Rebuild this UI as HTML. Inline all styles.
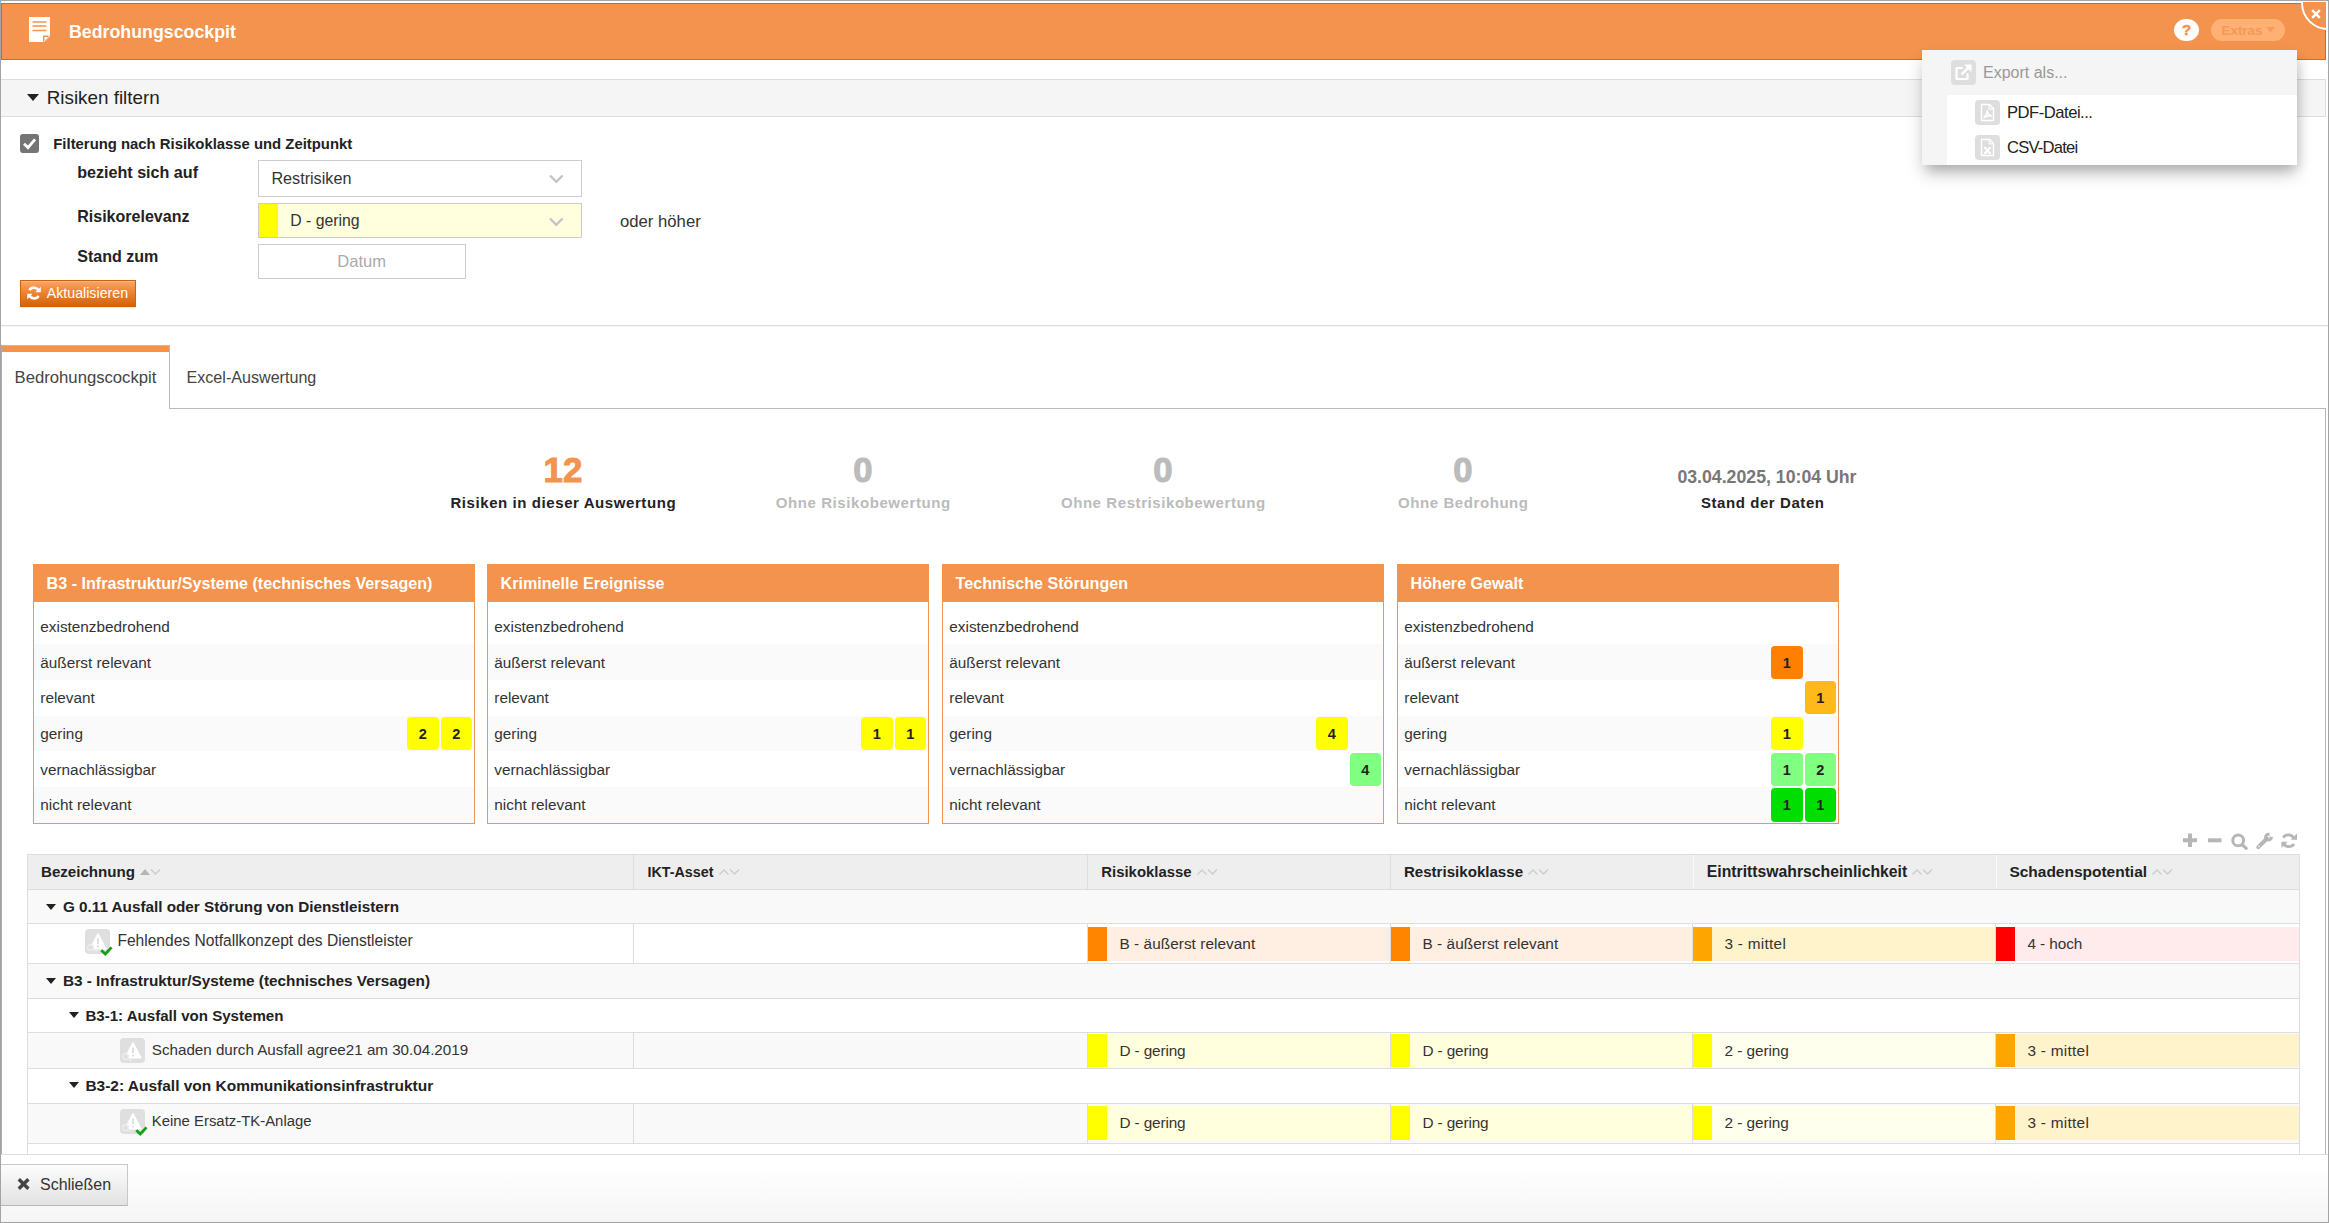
<!DOCTYPE html>
<html lang="de"><head><meta charset="utf-8"><title>Bedrohungscockpit</title>
<style>
html,body{margin:0;padding:0;background:#fff;}
body{width:2329px;height:1223px;position:relative;overflow:hidden;font-family:"Liberation Sans",sans-serif;}
.b{position:absolute;display:block;}
.t{position:absolute;white-space:nowrap;display:block;}
</style></head><body>
<div class="b" style="left:0px;top:0px;width:2329px;height:1223px;background:#fff;"></div>
<div class="b" style="left:0px;top:0px;width:2329px;height:1px;background:#a4a4a4;"></div>
<div class="b" style="left:0px;top:0px;width:1px;height:1223px;background:#a4a4a4;"></div>
<div class="b" style="left:2328px;top:0px;width:1px;height:1223px;background:#a4a4a4;"></div>
<div class="b" style="left:0px;top:1222px;width:2329px;height:1px;background:#a4a4a4;"></div>
<div class="b" style="left:1px;top:345px;width:1px;height:810px;background:#aaa;"></div>
<div class="b" style="left:2325px;top:408px;width:1px;height:747px;background:#b4b4b4;"></div>
<div class="b" style="left:1px;top:3px;width:2325px;height:57px;background:#f4934d;border:1px solid #d8690e;box-sizing:border-box;"></div>
<svg class="b" style="left:29px;top:17px" width="21" height="25" viewBox="0 0 21 25"><path d="M0 0H21V19L15 25H0Z" fill="#fff"/><path d="M14 18.5H20.5L14 25Z" fill="#f4934d"/><path d="M15.5 20H19L15.5 23.5Z" fill="#fff"/><g stroke="#f4934d" stroke-width="1.3"><path d="M3.5 5H17.5M3.5 9H17.5M3.5 13.5H17.5"/></g></svg>
<span class="t" style="left:69.0px;top:20px;font-size:17.79px;line-height:24px;color:#fff;font-weight:bold;">Bedrohungscockpit</span>
<div class="b" style="left:2174px;top:19px;width:25px;height:22px;background:#fff;border-radius:12px/11px;"></div>
<span class="t" style="left:2181.9px;top:19px;font-size:15px;line-height:21px;color:#f4934d;font-weight:bold;-webkit-text-stroke:0.5px #f4934d;">?</span>
<div class="b" style="left:2211px;top:19px;width:74px;height:22px;background:#ffb072;border-radius:11px;"></div>
<span class="t" style="left:2221.5px;top:21px;font-size:13.41px;line-height:19px;color:#f4985a;font-weight:bold;">Extras</span>
<svg class="b" style="left:2266px;top:27px" width="9" height="6"><path d="M0 0H9L4.5 5.5Z" fill="#f59c5c"/></svg>
<div class="b" style="left:2290px;top:2px;width:36px;height:40px;overflow:hidden;"><div class="b" style="left:11px;top:-26px;width:54px;height:54px;border-radius:50%;border:2px solid #fff;background:#f4934d;box-sizing:border-box;"></div></div>
<svg class="b" style="left:2311px;top:9px" width="10" height="10" viewBox="0 0 10 10"><path d="M1.2 1.2L8.8 8.8M8.8 1.2L1.2 8.8" stroke="#fff" stroke-width="2.6"/></svg>
<div class="b" style="left:1px;top:79px;width:2325px;height:38px;background:#f5f5f5;border:1px solid #ddd;border-left:none;box-sizing:border-box;"></div>
<svg class="b" style="left:27px;top:94px" width="12" height="7"><path d="M0 0H12L6 7Z" fill="#222"/></svg>
<span class="t" style="left:46.7px;top:85px;font-size:18.83px;line-height:25px;color:#222;">Risiken filtern</span>
<div class="b" style="left:20px;top:134px;width:19px;height:19px;background:#757575;border-radius:3px;"></div>
<svg class="b" style="left:20px;top:134px" width="19" height="19" viewBox="0 0 19 19"><path d="M4 9.8L8 13.6L15 5.4" stroke="#fff" stroke-width="2.8" fill="none"/></svg>
<span class="t" style="left:53.3px;top:134px;font-size:14.87px;line-height:20px;color:#222;font-weight:bold;">Filterung nach Risikoklasse und Zeitpunkt</span>
<span class="t" style="left:77.2px;top:161px;font-size:16.13px;line-height:22px;color:#222;font-weight:bold;">bezieht sich auf</span>
<span class="t" style="left:77.2px;top:205px;font-size:16.05px;line-height:22px;color:#222;font-weight:bold;">Risikorelevanz</span>
<span class="t" style="left:77.2px;top:245px;font-size:16.06px;line-height:22px;color:#222;font-weight:bold;">Stand zum</span>
<div class="b" style="left:258px;top:160px;width:324px;height:37px;border:1px solid #ccc;box-sizing:border-box;background:#fff;"></div>
<span class="t" style="left:271.4px;top:167px;font-size:16.18px;line-height:22px;color:#333;">Restrisiken</span>
<svg class="b" style="left:548.5px;top:173.5px" width="15" height="10" viewBox="0 0 15 10"><path d="M1 1.5L7.3 7.8L13.6 1.5" stroke="#c4c4c4" stroke-width="2.4" fill="none"/></svg>
<div class="b" style="left:258px;top:203px;width:324px;height:35px;border:1px solid #ccc;box-sizing:border-box;background:#ffffdd;"></div>
<div class="b" style="left:259px;top:204px;width:19px;height:33px;background:#ffff00;"></div>
<span class="t" style="left:290.3px;top:210px;font-size:15.81px;line-height:21px;color:#333;">D - gering</span>
<svg class="b" style="left:548.5px;top:216.5px" width="15" height="10" viewBox="0 0 15 10"><path d="M1 1.5L7.3 7.8L13.6 1.5" stroke="#c4c4c4" stroke-width="2.4" fill="none"/></svg>
<span class="t" style="left:620.0px;top:210px;font-size:16.71px;line-height:23px;color:#333;">oder höher</span>
<div class="b" style="left:258px;top:244px;width:208px;height:35px;border:1px solid #ccc;box-sizing:border-box;background:#fff;"></div>
<span class="t" style="left:337.3px;top:250px;font-size:16.57px;line-height:23px;color:#aaa;">Datum</span>
<div class="b" style="left:20px;top:280px;width:116px;height:27px;background:linear-gradient(#f9a667 0%,#ee8333 45%,#d2630a 100%);border:1px solid #cf6209;box-sizing:border-box;box-shadow:0 1px 1px rgba(0,0,0,.08), inset 0 1px 0 rgba(255,255,255,.18);"></div>
<svg class="b" style="left:27px;top:286px" width="14" height="14" viewBox="0 0 14 14"><path d="M11.8 5.2A5.2 5.2 0 0 0 2.4 4.2M2.2 8.8A5.2 5.2 0 0 0 11.6 9.8" stroke="#fff" stroke-width="2.6" fill="none"/><path d="M13.8 0.8V6.3H8.3Z M0.2 13.2V7.7H5.7Z" fill="#fff"/></svg>
<span class="t" style="left:46.7px;top:283px;font-size:14.22px;line-height:20px;color:#fff;">Aktualisieren</span>
<div class="b" style="left:1px;top:325px;width:2327px;height:1px;background:#dcdcdc;"></div>
<div class="b" style="left:1px;top:326px;width:2327px;height:1px;background:#f4f4f4;"></div>
<div class="b" style="left:2px;top:346px;width:167px;height:6px;background:#f4934d;"></div>
<div class="b" style="left:2px;top:345px;width:168px;height:1px;background:#b9bdc1;"></div>
<div class="b" style="left:169px;top:346px;width:1px;height:63px;background:#bbb;"></div>
<div class="b" style="left:169px;top:408px;width:2157px;height:1px;background:#bbb;"></div>
<span class="t" style="left:14.6px;top:366px;font-size:16.68px;line-height:23px;color:#444;">Bedrohungscockpit</span>
<span class="t" style="left:186.5px;top:366px;font-size:16.12px;line-height:22px;color:#444;">Excel-Auswertung</span>
<span class="t" style="left:543.6px;top:449px;font-size:34.8px;line-height:42px;color:#f4934d;font-weight:bold;-webkit-text-stroke:1px #f4934d;">12</span>
<span class="t" style="left:450.4px;top:492px;font-size:15px;line-height:21px;color:#222;font-weight:bold;letter-spacing:0.58px;">Risiken in dieser Auswertung</span>
<span class="t" style="left:853.3px;top:449px;font-size:34.8px;line-height:42px;color:#bbb;font-weight:bold;-webkit-text-stroke:1px #bbb;">0</span>
<span class="t" style="left:775.8px;top:492px;font-size:15px;line-height:21px;color:#bbb;font-weight:bold;letter-spacing:0.58px;">Ohne Risikobewertung</span>
<span class="t" style="left:1153.3px;top:449px;font-size:34.8px;line-height:42px;color:#bbb;font-weight:bold;-webkit-text-stroke:1px #bbb;">0</span>
<span class="t" style="left:1060.9px;top:492px;font-size:15px;line-height:21px;color:#bbb;font-weight:bold;letter-spacing:0.58px;">Ohne Restrisikobewertung</span>
<span class="t" style="left:1453.3px;top:449px;font-size:34.8px;line-height:42px;color:#bbb;font-weight:bold;-webkit-text-stroke:1px #bbb;">0</span>
<span class="t" style="left:1398.0px;top:492px;font-size:15px;line-height:21px;color:#bbb;font-weight:bold;letter-spacing:0.58px;">Ohne Bedrohung</span>
<span class="t" style="left:1677.4px;top:465px;font-size:17.72px;line-height:24px;color:#777;font-weight:bold;">03.04.2025, 10:04 Uhr</span>
<span class="t" style="left:1700.9px;top:492px;font-size:15px;line-height:21px;color:#222;font-weight:bold;letter-spacing:0.58px;">Stand der Daten</span>
<div class="b" style="left:33px;top:564px;width:442px;height:260px;border:1px solid #f4934d;box-sizing:border-box;background:#fff;"></div>
<div class="b" style="left:33px;top:564px;width:442px;height:38px;background:#f4934d;"></div>
<span class="t" style="left:46.6px;top:572px;font-size:16.12px;line-height:22px;color:#fff;font-weight:bold;">B3 - Infrastruktur/Systeme (technisches Versagen)</span>
<span class="t" style="left:40.3px;top:616px;font-size:15.33px;line-height:21px;color:#333;">existenzbedrohend</span>
<div class="b" style="left:34px;top:644px;width:440px;height:36px;background:#fafafa;"></div>
<span class="t" style="left:40.3px;top:652px;font-size:15.33px;line-height:21px;color:#333;">äußerst relevant</span>
<span class="t" style="left:40.3px;top:687px;font-size:15.33px;line-height:21px;color:#333;">relevant</span>
<div class="b" style="left:34px;top:716px;width:440px;height:35px;background:#fafafa;"></div>
<span class="t" style="left:40.3px;top:723px;font-size:15.33px;line-height:21px;color:#333;">gering</span>
<div class="b" style="left:407.0px;top:717px;width:31.5px;height:33px;background:#ffff00;border-radius:4px;"></div>
<span class="t" style="left:418.7px;top:724px;font-size:14.5px;line-height:20px;color:#222;font-weight:bold;">2</span>
<div class="b" style="left:440.5px;top:717px;width:31.5px;height:33px;background:#ffff00;border-radius:4px;"></div>
<span class="t" style="left:452.2px;top:724px;font-size:14.5px;line-height:20px;color:#222;font-weight:bold;">2</span>
<span class="t" style="left:40.3px;top:759px;font-size:15.33px;line-height:21px;color:#333;">vernachlässigbar</span>
<div class="b" style="left:34px;top:787px;width:440px;height:36px;background:#fafafa;"></div>
<span class="t" style="left:40.3px;top:794px;font-size:15.33px;line-height:21px;color:#333;">nicht relevant</span>
<div class="b" style="left:487px;top:564px;width:442px;height:260px;border:1px solid #f4934d;box-sizing:border-box;background:#fff;"></div>
<div class="b" style="left:487px;top:564px;width:442px;height:38px;background:#f4934d;"></div>
<span class="t" style="left:500.6px;top:572px;font-size:16.12px;line-height:22px;color:#fff;font-weight:bold;">Kriminelle Ereignisse</span>
<span class="t" style="left:494.3px;top:616px;font-size:15.33px;line-height:21px;color:#333;">existenzbedrohend</span>
<div class="b" style="left:488px;top:644px;width:440px;height:36px;background:#fafafa;"></div>
<span class="t" style="left:494.3px;top:652px;font-size:15.33px;line-height:21px;color:#333;">äußerst relevant</span>
<span class="t" style="left:494.3px;top:687px;font-size:15.33px;line-height:21px;color:#333;">relevant</span>
<div class="b" style="left:488px;top:716px;width:440px;height:35px;background:#fafafa;"></div>
<span class="t" style="left:494.3px;top:723px;font-size:15.33px;line-height:21px;color:#333;">gering</span>
<div class="b" style="left:861.0px;top:717px;width:31.5px;height:33px;background:#ffff00;border-radius:4px;"></div>
<span class="t" style="left:872.7px;top:724px;font-size:14.5px;line-height:20px;color:#222;font-weight:bold;">1</span>
<div class="b" style="left:894.5px;top:717px;width:31.5px;height:33px;background:#ffff00;border-radius:4px;"></div>
<span class="t" style="left:906.2px;top:724px;font-size:14.5px;line-height:20px;color:#222;font-weight:bold;">1</span>
<span class="t" style="left:494.3px;top:759px;font-size:15.33px;line-height:21px;color:#333;">vernachlässigbar</span>
<div class="b" style="left:488px;top:787px;width:440px;height:36px;background:#fafafa;"></div>
<span class="t" style="left:494.3px;top:794px;font-size:15.33px;line-height:21px;color:#333;">nicht relevant</span>
<div class="b" style="left:942px;top:564px;width:442px;height:260px;border:1px solid #f4934d;box-sizing:border-box;background:#fff;"></div>
<div class="b" style="left:942px;top:564px;width:442px;height:38px;background:#f4934d;"></div>
<span class="t" style="left:955.6px;top:572px;font-size:16.12px;line-height:22px;color:#fff;font-weight:bold;">Technische Störungen</span>
<span class="t" style="left:949.3px;top:616px;font-size:15.33px;line-height:21px;color:#333;">existenzbedrohend</span>
<div class="b" style="left:943px;top:644px;width:440px;height:36px;background:#fafafa;"></div>
<span class="t" style="left:949.3px;top:652px;font-size:15.33px;line-height:21px;color:#333;">äußerst relevant</span>
<span class="t" style="left:949.3px;top:687px;font-size:15.33px;line-height:21px;color:#333;">relevant</span>
<div class="b" style="left:943px;top:716px;width:440px;height:35px;background:#fafafa;"></div>
<span class="t" style="left:949.3px;top:723px;font-size:15.33px;line-height:21px;color:#333;">gering</span>
<div class="b" style="left:1316.0px;top:717px;width:31.5px;height:33px;background:#ffff00;border-radius:4px;"></div>
<span class="t" style="left:1327.7px;top:724px;font-size:14.5px;line-height:20px;color:#222;font-weight:bold;">4</span>
<span class="t" style="left:949.3px;top:759px;font-size:15.33px;line-height:21px;color:#333;">vernachlässigbar</span>
<div class="b" style="left:1349.5px;top:753px;width:31.5px;height:33px;background:#80ff80;border-radius:4px;"></div>
<span class="t" style="left:1361.2px;top:760px;font-size:14.5px;line-height:20px;color:#222;font-weight:bold;">4</span>
<div class="b" style="left:943px;top:787px;width:440px;height:36px;background:#fafafa;"></div>
<span class="t" style="left:949.3px;top:794px;font-size:15.33px;line-height:21px;color:#333;">nicht relevant</span>
<div class="b" style="left:1397px;top:564px;width:442px;height:260px;border:1px solid #f4934d;box-sizing:border-box;background:#fff;"></div>
<div class="b" style="left:1397px;top:564px;width:442px;height:38px;background:#f4934d;"></div>
<span class="t" style="left:1410.6px;top:572px;font-size:16.12px;line-height:22px;color:#fff;font-weight:bold;">Höhere Gewalt</span>
<span class="t" style="left:1404.3px;top:616px;font-size:15.33px;line-height:21px;color:#333;">existenzbedrohend</span>
<div class="b" style="left:1398px;top:644px;width:440px;height:36px;background:#fafafa;"></div>
<span class="t" style="left:1404.3px;top:652px;font-size:15.33px;line-height:21px;color:#333;">äußerst relevant</span>
<div class="b" style="left:1771.0px;top:646px;width:31.5px;height:33px;background:#ff8000;border-radius:4px;"></div>
<span class="t" style="left:1782.7px;top:653px;font-size:14.5px;line-height:20px;color:#222;font-weight:bold;">1</span>
<span class="t" style="left:1404.3px;top:687px;font-size:15.33px;line-height:21px;color:#333;">relevant</span>
<div class="b" style="left:1804.5px;top:681px;width:31.5px;height:33px;background:#ffb91a;border-radius:4px;"></div>
<span class="t" style="left:1816.2px;top:688px;font-size:14.5px;line-height:20px;color:#222;font-weight:bold;">1</span>
<div class="b" style="left:1398px;top:716px;width:440px;height:35px;background:#fafafa;"></div>
<span class="t" style="left:1404.3px;top:723px;font-size:15.33px;line-height:21px;color:#333;">gering</span>
<div class="b" style="left:1771.0px;top:717px;width:31.5px;height:33px;background:#ffff00;border-radius:4px;"></div>
<span class="t" style="left:1782.7px;top:724px;font-size:14.5px;line-height:20px;color:#222;font-weight:bold;">1</span>
<span class="t" style="left:1404.3px;top:759px;font-size:15.33px;line-height:21px;color:#333;">vernachlässigbar</span>
<div class="b" style="left:1771.0px;top:753px;width:31.5px;height:33px;background:#80ff80;border-radius:4px;"></div>
<span class="t" style="left:1782.7px;top:760px;font-size:14.5px;line-height:20px;color:#222;font-weight:bold;">1</span>
<div class="b" style="left:1804.5px;top:753px;width:31.5px;height:33px;background:#80ff80;border-radius:4px;"></div>
<span class="t" style="left:1816.2px;top:760px;font-size:14.5px;line-height:20px;color:#222;font-weight:bold;">2</span>
<div class="b" style="left:1398px;top:787px;width:440px;height:36px;background:#fafafa;"></div>
<span class="t" style="left:1404.3px;top:794px;font-size:15.33px;line-height:21px;color:#333;">nicht relevant</span>
<div class="b" style="left:1771.0px;top:788px;width:31.5px;height:34px;background:#00dd00;border-radius:4px;"></div>
<span class="t" style="left:1782.7px;top:795px;font-size:14.5px;line-height:20px;color:#222;font-weight:bold;">1</span>
<div class="b" style="left:1804.5px;top:788px;width:31.5px;height:34px;background:#00dd00;border-radius:4px;"></div>
<span class="t" style="left:1816.2px;top:795px;font-size:14.5px;line-height:20px;color:#222;font-weight:bold;">1</span>
<svg class="b" style="left:2183px;top:832px" width="116" height="19" viewBox="0 0 116 19"><g stroke="#b6b6b6" fill="none"><path d="M0 8.3H14M7 1.5V15" stroke-width="4"/><path d="M25 8.3H38.5" stroke-width="4"/><circle cx="55.2" cy="8.4" r="5.4" stroke-width="3"/><path d="M59 12.3L63.2 16.3" stroke-width="3.2" stroke-linecap="round"/><path d="M75.3 15.2L84 6.5" stroke-width="4" stroke-linecap="round"/><circle cx="85.5" cy="5.2" r="2.9" stroke-width="3"/><path d="M111.2 6.8A6.3 6.3 0 0 0 100.2 5.6M100 10.8A6.3 6.3 0 0 0 111 12" stroke-width="2.8"/></g><path d="M114 1.6V7.8H107.8Z M98.5 16V9.8H104.7Z" fill="#b6b6b6"/><path d="M87 0L91.5 4.5L88 5L86.2 3Z" fill="#fff"/><circle cx="76" cy="14.5" r="0.8" fill="#fff"/></svg>
<div class="b" style="left:27px;top:854px;width:2273px;height:36px;background:#eee;border:1px solid #ddd;box-sizing:border-box;"></div>
<span class="t" style="left:41.0px;top:861px;font-size:15.11px;line-height:21px;color:#222;font-weight:bold;">Bezeichnung</span>
<svg class="b" style="left:140.0px;top:867px" width="21" height="10" viewBox="0 0 21 10"><path d="M0 8L5 2L10 8Z" fill="#b5b5b5"/><path d="M11 2.5L15.5 7L20 2.5" stroke="#ccc" stroke-width="1.3" fill="none"/></svg>
<span class="t" style="left:647.5px;top:862px;font-size:14.31px;line-height:20px;color:#222;font-weight:bold;">IKT-Asset</span>
<svg class="b" style="left:718.5px;top:867px" width="21" height="10" viewBox="0 0 21 10"><path d="M0.5 7.5L5 3L9.5 7.5" stroke="#ccc" stroke-width="1.3" fill="none"/><path d="M11 2.5L15.5 7L20 2.5" stroke="#ccc" stroke-width="1.3" fill="none"/></svg>
<div class="b" style="left:633px;top:855px;width:1px;height:34px;background:#ddd;"></div>
<span class="t" style="left:1101.3px;top:862px;font-size:14.9px;line-height:20px;color:#222;font-weight:bold;">Risikoklasse</span>
<svg class="b" style="left:1196.6px;top:867px" width="21" height="10" viewBox="0 0 21 10"><path d="M0.5 7.5L5 3L9.5 7.5" stroke="#ccc" stroke-width="1.3" fill="none"/><path d="M11 2.5L15.5 7L20 2.5" stroke="#ccc" stroke-width="1.3" fill="none"/></svg>
<div class="b" style="left:1087px;top:855px;width:1px;height:34px;background:#ddd;"></div>
<span class="t" style="left:1403.9px;top:861px;font-size:15.1px;line-height:21px;color:#222;font-weight:bold;">Restrisikoklasse</span>
<svg class="b" style="left:1528.1px;top:867px" width="21" height="10" viewBox="0 0 21 10"><path d="M0.5 7.5L5 3L9.5 7.5" stroke="#ccc" stroke-width="1.3" fill="none"/><path d="M11 2.5L15.5 7L20 2.5" stroke="#ccc" stroke-width="1.3" fill="none"/></svg>
<div class="b" style="left:1390px;top:855px;width:1px;height:34px;background:#ddd;"></div>
<span class="t" style="left:1706.8px;top:861px;font-size:15.75px;line-height:21px;color:#222;font-weight:bold;">Eintrittswahrscheinlichkeit</span>
<svg class="b" style="left:1912.2px;top:867px" width="21" height="10" viewBox="0 0 21 10"><path d="M0.5 7.5L5 3L9.5 7.5" stroke="#ccc" stroke-width="1.3" fill="none"/><path d="M11 2.5L15.5 7L20 2.5" stroke="#ccc" stroke-width="1.3" fill="none"/></svg>
<div class="b" style="left:1693px;top:855px;width:1px;height:34px;background:#f9f9f9;"></div>
<span class="t" style="left:2009.4px;top:861px;font-size:15.49px;line-height:21px;color:#222;font-weight:bold;">Schadenspotential</span>
<svg class="b" style="left:2152.1px;top:867px" width="21" height="10" viewBox="0 0 21 10"><path d="M0.5 7.5L5 3L9.5 7.5" stroke="#ccc" stroke-width="1.3" fill="none"/><path d="M11 2.5L15.5 7L20 2.5" stroke="#ccc" stroke-width="1.3" fill="none"/></svg>
<div class="b" style="left:1996px;top:855px;width:1px;height:34px;background:#f9f9f9;"></div>
<div class="b" style="left:27px;top:890px;width:2273px;height:34px;background:#f9f9f9;border-left:1px solid #ddd;border-right:1px solid #ddd;box-sizing:border-box;"></div>
<div class="b" style="left:27px;top:923px;width:2273px;height:1px;background:#ddd;"></div>
<div class="b" style="left:27px;top:924px;width:2273px;height:40px;background:#fff;border-left:1px solid #ddd;border-right:1px solid #ddd;box-sizing:border-box;"></div>
<div class="b" style="left:27px;top:963px;width:2273px;height:1px;background:#ddd;"></div>
<div class="b" style="left:27px;top:964px;width:2273px;height:35px;background:#f9f9f9;border-left:1px solid #ddd;border-right:1px solid #ddd;box-sizing:border-box;"></div>
<div class="b" style="left:27px;top:998px;width:2273px;height:1px;background:#ddd;"></div>
<div class="b" style="left:27px;top:999px;width:2273px;height:34px;background:#fff;border-left:1px solid #ddd;border-right:1px solid #ddd;box-sizing:border-box;"></div>
<div class="b" style="left:27px;top:1032px;width:2273px;height:1px;background:#ddd;"></div>
<div class="b" style="left:27px;top:1033px;width:2273px;height:36px;background:#f9f9f9;border-left:1px solid #ddd;border-right:1px solid #ddd;box-sizing:border-box;"></div>
<div class="b" style="left:27px;top:1068px;width:2273px;height:1px;background:#ddd;"></div>
<div class="b" style="left:27px;top:1069px;width:2273px;height:35px;background:#fff;border-left:1px solid #ddd;border-right:1px solid #ddd;box-sizing:border-box;"></div>
<div class="b" style="left:27px;top:1103px;width:2273px;height:1px;background:#ddd;"></div>
<div class="b" style="left:27px;top:1104px;width:2273px;height:40px;background:#f9f9f9;border-left:1px solid #ddd;border-right:1px solid #ddd;box-sizing:border-box;"></div>
<div class="b" style="left:27px;top:1143px;width:2273px;height:1px;background:#ddd;"></div>
<div class="b" style="left:27px;top:1144px;width:2273px;height:10px;background:#fff;border-left:1px solid #ddd;border-right:1px solid #ddd;box-sizing:border-box;"></div>
<svg class="b" style="left:46.4px;top:904px" width="10" height="6"><path d="M0 0H10L5 6Z" fill="#222"/></svg>
<span class="t" style="left:62.9px;top:896px;font-size:15.27px;line-height:21px;color:#222;font-weight:bold;">G 0.11 Ausfall oder Störung von Dienstleistern</span>
<svg class="b" style="left:46.4px;top:978px" width="10" height="6"><path d="M0 0H10L5 6Z" fill="#222"/></svg>
<span class="t" style="left:62.9px;top:970px;font-size:15.34px;line-height:21px;color:#222;font-weight:bold;">B3 - Infrastruktur/Systeme (technisches Versagen)</span>
<svg class="b" style="left:68.9px;top:1012px" width="10" height="6"><path d="M0 0H10L5 6Z" fill="#222"/></svg>
<span class="t" style="left:85.4px;top:1005px;font-size:15.09px;line-height:21px;color:#222;font-weight:bold;">B3-1: Ausfall von Systemen</span>
<svg class="b" style="left:68.9px;top:1082px" width="10" height="6"><path d="M0 0H10L5 6Z" fill="#222"/></svg>
<span class="t" style="left:85.4px;top:1075px;font-size:15.49px;line-height:21px;color:#222;font-weight:bold;">B3-2: Ausfall von Kommunikationsinfrastruktur</span>
<svg class="b" style="left:85px;top:929px" width="30" height="30" viewBox="0 0 30 30"><rect x="0" y="0" width="25" height="25" rx="4" fill="#dfdfdf"/><path d="M13 4.3L21.3 20H4.7Z" fill="#fff" stroke="#fff" stroke-width="1" stroke-linejoin="round"/><path d="M13 9.5V15M13 16.8V18.4" stroke="#dfdfdf" stroke-width="2"/><circle cx="5.6" cy="18.6" r="2.9" fill="#dfdfdf" stroke="#ededed" stroke-width="1.4"/><circle cx="10.3" cy="22.3" r="1.1" fill="none" stroke="#ededed" stroke-width="1"/><path d="M16.3 21.2L20.3 25L26.5 18.3" stroke="#12a012" stroke-width="2.7" fill="none"/></svg>
<span class="t" style="left:117.4px;top:930px;font-size:15.59px;line-height:21px;color:#333;">Fehlendes Notfallkonzept des Dienstleister</span>
<div class="b" style="left:633px;top:924px;width:1px;height:39px;background:#ddd;"></div>
<div class="b" style="left:1087px;top:924px;width:1px;height:39px;background:#ddd;"></div>
<div class="b" style="left:1390px;top:924px;width:1px;height:39px;background:#ddd;"></div>
<div class="b" style="left:1692px;top:924px;width:1px;height:39px;background:#ddd;"></div>
<div class="b" style="left:1995px;top:924px;width:1px;height:39px;background:#ddd;"></div>
<div class="b" style="left:1088px;top:927px;width:302px;height:34px;background:#ffeee2;"></div>
<div class="b" style="left:1088px;top:927px;width:19px;height:34px;background:#ff8500;"></div>
<span class="t" style="left:1119.5px;top:933px;font-size:15.33px;line-height:21px;color:#333;letter-spacing:0.055px;">B - äußerst relevant</span>
<div class="b" style="left:1391px;top:927px;width:301px;height:34px;background:#ffeee2;"></div>
<div class="b" style="left:1391px;top:927px;width:19px;height:34px;background:#ff8500;"></div>
<span class="t" style="left:1422.5px;top:933px;font-size:15.33px;line-height:21px;color:#333;letter-spacing:0.055px;">B - äußerst relevant</span>
<div class="b" style="left:1693px;top:927px;width:302px;height:34px;background:#fff3cc;"></div>
<div class="b" style="left:1693px;top:927px;width:19px;height:34px;background:#ffa500;"></div>
<span class="t" style="left:1724.5px;top:933px;font-size:15.33px;line-height:21px;color:#333;letter-spacing:0.283px;">3 - mittel</span>
<div class="b" style="left:1996px;top:927px;width:303px;height:34px;background:#ffebeb;"></div>
<div class="b" style="left:1996px;top:927px;width:19px;height:34px;background:#ff0000;"></div>
<span class="t" style="left:2027.5px;top:933px;font-size:15.33px;line-height:21px;color:#333;letter-spacing:-0.086px;">4 - hoch</span>
<svg class="b" style="left:120px;top:1038px" width="30" height="30" viewBox="0 0 30 30"><rect x="0" y="0" width="25" height="25" rx="4" fill="#dfdfdf"/><path d="M13 4.3L21.3 20H4.7Z" fill="#fff" stroke="#fff" stroke-width="1" stroke-linejoin="round"/><path d="M13 9.5V15M13 16.8V18.4" stroke="#dfdfdf" stroke-width="2"/><circle cx="5.6" cy="18.6" r="2.9" fill="#dfdfdf" stroke="#ededed" stroke-width="1.4"/><circle cx="10.3" cy="22.3" r="1.1" fill="none" stroke="#ededed" stroke-width="1"/></svg>
<span class="t" style="left:151.8px;top:1039px;font-size:15.18px;line-height:21px;color:#333;">Schaden durch Ausfall agree21 am 30.04.2019</span>
<div class="b" style="left:633px;top:1033px;width:1px;height:35px;background:#ddd;"></div>
<div class="b" style="left:1087px;top:1033px;width:1px;height:35px;background:#ddd;"></div>
<div class="b" style="left:1390px;top:1033px;width:1px;height:35px;background:#ddd;"></div>
<div class="b" style="left:1692px;top:1033px;width:1px;height:35px;background:#ddd;"></div>
<div class="b" style="left:1995px;top:1033px;width:1px;height:35px;background:#ddd;"></div>
<div class="b" style="left:1088px;top:1034px;width:302px;height:33px;background:#ffffdd;"></div>
<div class="b" style="left:1088px;top:1034px;width:19px;height:33px;background:#ffff00;"></div>
<span class="t" style="left:1119.5px;top:1040px;font-size:15.33px;line-height:21px;color:#333;letter-spacing:-0.13px;">D - gering</span>
<div class="b" style="left:1391px;top:1034px;width:301px;height:33px;background:#ffffdd;"></div>
<div class="b" style="left:1391px;top:1034px;width:19px;height:33px;background:#ffff00;"></div>
<span class="t" style="left:1422.5px;top:1040px;font-size:15.33px;line-height:21px;color:#333;letter-spacing:-0.13px;">D - gering</span>
<div class="b" style="left:1693px;top:1034px;width:302px;height:33px;background:#ffffee;"></div>
<div class="b" style="left:1693px;top:1034px;width:19px;height:33px;background:#ffff00;"></div>
<span class="t" style="left:1724.5px;top:1040px;font-size:15.33px;line-height:21px;color:#333;letter-spacing:-0.046px;">2 - gering</span>
<div class="b" style="left:1996px;top:1034px;width:303px;height:33px;background:#fff3cc;"></div>
<div class="b" style="left:1996px;top:1034px;width:19px;height:33px;background:#ffa500;"></div>
<span class="t" style="left:2027.5px;top:1040px;font-size:15.33px;line-height:21px;color:#333;letter-spacing:0.283px;">3 - mittel</span>
<svg class="b" style="left:120px;top:1109px" width="30" height="30" viewBox="0 0 30 30"><rect x="0" y="0" width="25" height="25" rx="4" fill="#dfdfdf"/><path d="M13 4.3L21.3 20H4.7Z" fill="#fff" stroke="#fff" stroke-width="1" stroke-linejoin="round"/><path d="M13 9.5V15M13 16.8V18.4" stroke="#dfdfdf" stroke-width="2"/><circle cx="5.6" cy="18.6" r="2.9" fill="#dfdfdf" stroke="#ededed" stroke-width="1.4"/><circle cx="10.3" cy="22.3" r="1.1" fill="none" stroke="#ededed" stroke-width="1"/><path d="M16.3 21.2L20.3 25L26.5 18.3" stroke="#12a012" stroke-width="2.7" fill="none"/></svg>
<span class="t" style="left:151.8px;top:1111px;font-size:14.9px;line-height:20px;color:#333;">Keine Ersatz-TK-Anlage</span>
<div class="b" style="left:633px;top:1104px;width:1px;height:39px;background:#ddd;"></div>
<div class="b" style="left:1087px;top:1104px;width:1px;height:39px;background:#ddd;"></div>
<div class="b" style="left:1390px;top:1104px;width:1px;height:39px;background:#ddd;"></div>
<div class="b" style="left:1692px;top:1104px;width:1px;height:39px;background:#ddd;"></div>
<div class="b" style="left:1995px;top:1104px;width:1px;height:39px;background:#ddd;"></div>
<div class="b" style="left:1088px;top:1106px;width:302px;height:34px;background:#ffffdd;"></div>
<div class="b" style="left:1088px;top:1106px;width:19px;height:34px;background:#ffff00;"></div>
<span class="t" style="left:1119.5px;top:1112px;font-size:15.33px;line-height:21px;color:#333;letter-spacing:-0.13px;">D - gering</span>
<div class="b" style="left:1391px;top:1106px;width:301px;height:34px;background:#ffffdd;"></div>
<div class="b" style="left:1391px;top:1106px;width:19px;height:34px;background:#ffff00;"></div>
<span class="t" style="left:1422.5px;top:1112px;font-size:15.33px;line-height:21px;color:#333;letter-spacing:-0.13px;">D - gering</span>
<div class="b" style="left:1693px;top:1106px;width:302px;height:34px;background:#ffffee;"></div>
<div class="b" style="left:1693px;top:1106px;width:19px;height:34px;background:#ffff00;"></div>
<span class="t" style="left:1724.5px;top:1112px;font-size:15.33px;line-height:21px;color:#333;letter-spacing:-0.046px;">2 - gering</span>
<div class="b" style="left:1996px;top:1106px;width:303px;height:34px;background:#fff3cc;"></div>
<div class="b" style="left:1996px;top:1106px;width:19px;height:34px;background:#ffa500;"></div>
<span class="t" style="left:2027.5px;top:1112px;font-size:15.33px;line-height:21px;color:#333;letter-spacing:0.283px;">3 - mittel</span>
<div class="b" style="left:1px;top:1154px;width:2327px;height:68px;background:linear-gradient(#fff 15%,#f5f5f5);border-top:1px solid #ddd;box-sizing:border-box;"></div>
<div class="b" style="left:1px;top:1164px;width:127px;height:42px;background:linear-gradient(#fdfdfd,#e2e2e2);border:1px solid #c8c8c8;border-left:none;border-bottom-color:#b8b8b8;box-sizing:border-box;"></div>
<svg class="b" style="left:17px;top:1177px" width="14" height="14" viewBox="0 0 14 14"><path d="M1.8 2.2L11.4 11.8M11.4 2.2L1.8 11.8" stroke="#444" stroke-width="3.4"/></svg>
<span class="t" style="left:40.0px;top:1174px;font-size:15.97px;line-height:21px;color:#333;">Schließen</span>
<div class="b" style="left:1922px;top:50px;width:375px;height:115px;background:#f5f5f5;box-shadow:0 10px 16px -2px rgba(0,0,0,.25), 4px 6px 10px -2px rgba(0,0,0,.12);"></div>
<div class="b" style="left:1947px;top:95px;width:350px;height:70px;background:#fff;"></div>
<svg class="b" style="left:1951px;top:60px" width="25" height="25" viewBox="0 0 25 25"><rect width="25" height="25" rx="4" fill="#dedede"/><path d="M16.5 14V19H5.5V8H11" stroke="#fff" stroke-width="2.2" fill="none" stroke-linejoin="round" stroke-linecap="round"/><path d="M13 4.5H20.5V12Z" fill="#fff"/><path d="M17.5 7.5L10.5 14.5" stroke="#fff" stroke-width="2.4"/></svg>
<span class="t" style="left:1983.0px;top:62px;font-size:16.01px;line-height:21px;color:#999;">Export als...</span>
<svg class="b" style="left:1975px;top:100px" width="25" height="25" viewBox="0 0 25 25"><rect width="25" height="25" rx="4" fill="#dedede"/><path d="M6.5 4.5H14.5L18.5 8.5V20.5H6.5Z" stroke="#fff" stroke-width="1.4" fill="none"/><path d="M14.2 4.8V8.8H18.2" stroke="#fff" stroke-width="1.2" fill="none"/><path d="M9 17.5C11 15 12.5 12 12.3 10.5C12 12.5 14 15.5 16.5 16C14 15.5 11 16.5 9 17.5Z" stroke="#fff" stroke-width="1.5" fill="none" stroke-linejoin="round"/></svg>
<span class="t" style="left:2007.0px;top:101px;font-size:16.6px;line-height:23px;color:#222;letter-spacing:-0.484px;">PDF-Datei...</span>
<svg class="b" style="left:1975px;top:135px" width="25" height="25" viewBox="0 0 25 25"><rect width="25" height="25" rx="4" fill="#dedede"/><path d="M6.5 4.5H14.5L18.5 8.5V20.5H6.5Z" stroke="#fff" stroke-width="1.4" fill="none"/><path d="M14.2 4.8V8.8H18.2" stroke="#fff" stroke-width="1.2" fill="none"/><path d="M9.8 12.5L15.2 18.5M15.2 12.5L9.8 18.5" stroke="#fff" stroke-width="2"/><path d="M8.8 12.5H11.5M13.5 12.5H16.2M8.8 18.5H11.5M13.5 18.5H16.2" stroke="#fff" stroke-width="1"/></svg>
<span class="t" style="left:2007.0px;top:136px;font-size:16.6px;line-height:23px;color:#222;letter-spacing:-0.777px;">CSV-Datei</span>
</body></html>
